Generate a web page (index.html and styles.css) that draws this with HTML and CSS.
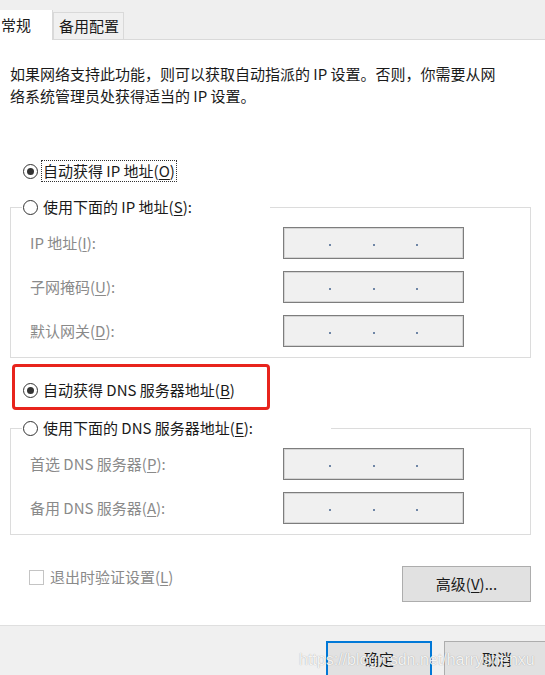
FILE: index.html
```html
<!DOCTYPE html>
<html lang="zh-CN">
<head>
<meta charset="utf-8">
<title>Internet 协议版本 4 (TCP/IPv4) 属性</title>
<link rel="stylesheet" href="styles.css">
</head>
<body>
<div class="dialog">
  <div class="tabs">
    <div class="tab tab-active">常规</div>
    <div class="tab tab-alt">备用配置</div>
  </div>

  <div class="panel">
    <p class="intro">如果网络支持此功能，则可以获取自动指派的 IP 设置。否则，你需要从网<br>络系统管理员处获得适当的 IP 设置。</p>

    <div class="radio-row auto-ip">
      <span class="radio checked"></span>
      <span class="radio-label focus">自动获得 IP 地址(<u>O</u>)</span>
    </div>

    <fieldset class="group group-ip">
      <legend class="group-legend">
        <span class="radio-row">
          <span class="radio"></span>
          <span class="radio-label">使用下面的 IP 地址(<u>S</u>):</span>
        </span>
      </legend>
      <div class="fields">
        <span class="field-label">IP 地址(<u>I</u>):</span>
        <span class="ip-box"><i></i><i></i><i></i></span>
        <span class="field-label">子网掩码(<u>U</u>):</span>
        <span class="ip-box"><i></i><i></i><i></i></span>
        <span class="field-label">默认网关(<u>D</u>):</span>
        <span class="ip-box"><i></i><i></i><i></i></span>
      </div>
    </fieldset>

    <div class="highlight">
      <div class="radio-row">
        <span class="radio checked"></span>
        <span class="radio-label">自动获得 DNS 服务器地址(<u>B</u>)</span>
      </div>
    </div>

    <fieldset class="group group-dns">
      <legend class="group-legend">
        <span class="radio-row">
          <span class="radio"></span>
          <span class="radio-label">使用下面的 DNS 服务器地址(<u>E</u>):</span>
        </span>
      </legend>
      <div class="fields">
        <span class="field-label">首选 DNS 服务器(<u>P</u>):</span>
        <span class="ip-box"><i></i><i></i><i></i></span>
        <span class="field-label">备用 DNS 服务器(<u>A</u>):</span>
        <span class="ip-box"><i></i><i></i><i></i></span>
      </div>
    </fieldset>

    <div class="footer-row">
      <div class="check-row">
        <span class="checkbox"></span>
        <span class="check-label">退出时验证设置(<u>L</u>)</span>
      </div>
      <button class="btn btn-advanced">高级(<u>V</u>)...</button>
    </div>
  </div>

  <div class="actions">
    <button class="btn btn-primary">确定</button>
    <button class="btn">取消</button>
  </div>

  <div class="watermark">https://blog.csdn.net/harryshenxu</div>
</div>
</body>
</html>
```

FILE: styles.css
```css
* {
  box-sizing: border-box;
}

html,
body {
  margin: 0;
  padding: 0;
}

body {
  width: 545px;
  height: 675px;
  overflow: hidden;
  background: #ffffff;
  font-family: "Noto Sans CJK SC", "Liberation Sans", sans-serif;
  font-size: 15px;
  color: #1a1a1a;
}

u {
  text-decoration-thickness: 1px;
  text-underline-offset: 2px;
}

.dialog {
  position: relative;
  width: 545px;
  height: 675px;
  display: flex;
  flex-direction: column;
}

/* tabs */
.tabs {
  height: 40px;
  flex: none;
  background: #efefef;
  border-bottom: 1px solid #d9d9d9;
  display: flex;
  align-items: flex-end;
}

.tab {
  flex: none;
  white-space: nowrap;
}

.tab-active {
  width: 53px;
  height: 30px;
  margin-bottom: -1px;
  background: #ffffff;
  border-right: 1px solid #d9d9d9;
  padding-left: 1px;
  line-height: 29px;
}

.tab-alt {
  width: 71px;
  height: 27px;
  border: 1px solid #d9d9d9;
  border-bottom: none;
  background: #f0f0f0;
  padding-left: 5px;
  line-height: 26px;
}

/* panel */
.panel {
  flex: 1;
  padding: 0 14px 0 10px;
}

.intro {
  margin: 23px 0 0;
  line-height: 21.5px;
  white-space: nowrap;
}

.radio-row {
  display: flex;
  align-items: center;
  line-height: 20px;
  white-space: nowrap;
}

.radio {
  flex: none;
  width: 15px;
  height: 15px;
  border: 1px solid #333333;
  border-radius: 50%;
  background: #ffffff;
  display: flex;
  align-items: center;
  justify-content: center;
}

.radio.checked::after {
  content: "";
  width: 7px;
  height: 7px;
  border-radius: 50%;
  background: #333333;
}

.radio-label {
  margin-left: 3px;
  padding: 0 1px;
  border: 1px solid transparent;
}

.radio-label.focus {
  border: 1px dotted #333333;
}

.auto-ip {
  margin-top: 54px;
  padding-left: 13px;
}

/* group boxes */
.group {
  margin: 0;
  padding: 0;
  border: 1px solid #dcdcdc;
  min-width: 0;
}

.group-ip {
  margin-top: 14px;
}

.group-dns {
  margin-top: 7px;
}

.group-legend {
  margin-left: 11px;
  padding: 0 76px 0 1px;
  background: #ffffff;
}

.fields {
  display: grid;
  grid-template-columns: 253px 181px;
  grid-auto-rows: 32px;
  row-gap: 12px;
  align-items: center;
  padding: 9px 0 10px 19px;
}

.field-label {
  color: #8a8a8a;
  line-height: 20px;
  white-space: nowrap;
}

.ip-box {
  height: 32px;
  background: #f0f0f0;
  border: 1px solid #7d7d7d;
  box-shadow: inset 0 0 0 1px #d4d4d4;
  display: flex;
  justify-content: center;
  align-items: center;
  gap: 41.5px;
}

.ip-box i {
  width: 2px;
  height: 2px;
  margin-top: 3px;
  background: #6f86a6;
}

/* red highlight */
.highlight {
  width: 258px;
  margin: 6px 0 0 2px;
  border: 3px solid #e8241d;
  border-radius: 4px;
  padding: 12px 0 6px 8px;
}

/* footer row */
.footer-row {
  margin-top: 31px;
  display: flex;
  justify-content: space-between;
  align-items: flex-start;
}

.check-row {
  margin-top: 1px;
  padding-left: 19px;
  display: flex;
  align-items: center;
  line-height: 20px;
  color: #8a8a8a;
}

.checkbox {
  width: 15px;
  height: 15px;
  border: 1px solid #c4c4c4;
  background: #ffffff;
  margin-right: 6px;
}

.btn {
  height: 36px;
  background: #e1e1e1;
  border: 1px solid #adadad;
  font-family: inherit;
  font-size: 15px;
  color: #1a1a1a;
  padding: 0;
  line-height: 20px;
}

.btn-advanced {
  width: 129px;
}

/* action bar */
.actions {
  height: 50px;
  flex: none;
  margin-right: -5px;
  background: #f0f0f0;
  border-top: 1px solid #dfdfdf;
  padding-top: 15px;
  display: flex;
  justify-content: flex-end;
  align-items: flex-start;
  gap: 12px;
}

.actions .btn {
  width: 106px;
}

.btn-primary {
  border: 2px solid #0078d7;
}

.watermark {
  position: absolute;
  left: 299px;
  top: 652px;
  font-family: "Liberation Sans", Arial, sans-serif;
  font-size: 16px;
  line-height: 16px;
  color: rgba(255, 255, 255, 0.88);
  text-shadow: 0 0 1px rgba(0, 0, 0, 0.35);
  white-space: nowrap;
  pointer-events: none;
}
```
